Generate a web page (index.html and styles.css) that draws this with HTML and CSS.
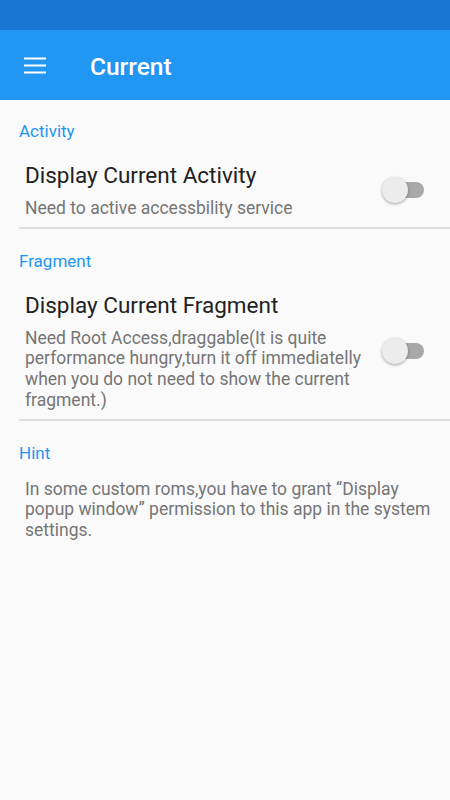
FILE: index.html
```html
<!DOCTYPE html>
<html>
<head>
    <title>Current</title>
    <link rel="stylesheet" href="styles.css">
</head>
<body>
    <div class="status-bar"></div>
    <header class="app-bar">
        <svg class="menu-icon" width="24" height="24" viewBox="0 0 24 24">
            <path d="M1 5.5h22M1 12.5h22M1 19.5h22" stroke="#fff" stroke-width="2"/>
        </svg>
        <h1>Current</h1>
    </header>

    <div class="prefs">
        <div class="category">Activity</div>
        <div class="pref-row">
            <div class="pref-text">
                <div class="pref-title">Display Current Activity</div>
                <div class="pref-summary">Need to active accessbility service</div>
            </div>
            <div class="switch"><span class="thumb"></span></div>
        </div>
        <div class="divider"></div>

        <div class="category">Fragment</div>
        <div class="pref-row">
            <div class="pref-text">
                <div class="pref-title">Display Current Fragment</div>
                <div class="pref-summary">Need Root Access,draggable(It is quite performance hungry,turn it off immediatelly when you do not need to show the current fragment.)</div>
            </div>
            <div class="switch"><span class="thumb"></span></div>
        </div>
        <div class="divider"></div>

        <div class="category">Hint</div>
        <div class="hint">In some custom roms,you have to grant “Display popup window” permission to this app in the system settings.</div>
    </div>
</body>
</html>
```

FILE: styles.css
```css
body {
  margin: 0;
  font-family: Roboto, "Noto Sans", sans-serif;
  background-color: #fafafa;
  width: 450px;
  height: 800px;
  overflow: hidden;
}
.status-bar {
  height: 30px;
  background-color: #1976d2;
}
.app-bar {
  height: 70px;
  background-color: #2196f3;
  display: flex;
  align-items: center;
  padding-left: 23px;
}
.menu-icon {
  display: block;
}
.app-bar h1 {
  margin: 3px 0 0 43px;
  color: #fff;
  font-size: 24.5px;
  font-weight: 500;
}
.prefs {
  padding-left: 19px;
}
.category {
  color: #2196f3;
  font-size: 17px;
  padding-top: 21px;
  line-height: 20px;
}
.divider + .category {
  padding-top: 22px;
}
.pref-row {
  display: flex;
  align-items: center;
  padding: 20px 0 8px 6px;
}
.pref-text {
  flex: 1;
  padding-right: 14px;
}
.pref-title {
  color: #212121;
  font-size: 22.5px;
  line-height: 28px;
  margin-bottom: 9px;
}
.pref-summary {
  color: #757575;
  font-size: 17.5px;
  line-height: 20.7px;
}
.switch {
  position: relative;
  width: 40px;
  height: 16px;
  border-radius: 8px;
  background-color: #a8a8a8;
  margin-right: 26px;
  flex-shrink: 0;
}
.thumb {
  position: absolute;
  left: -2px;
  top: -5px;
  width: 26px;
  height: 26px;
  border-radius: 50%;
  background-color: #ececec;
  box-shadow: 0 1px 3px rgba(0, 0, 0, 0.35);
}
.divider {
  height: 2px;
  background-color: #dedede;
}
.hint {
  color: #757575;
  font-size: 17.5px;
  line-height: 20.7px;
  padding: 16px 14px 0 6px;
}
```
